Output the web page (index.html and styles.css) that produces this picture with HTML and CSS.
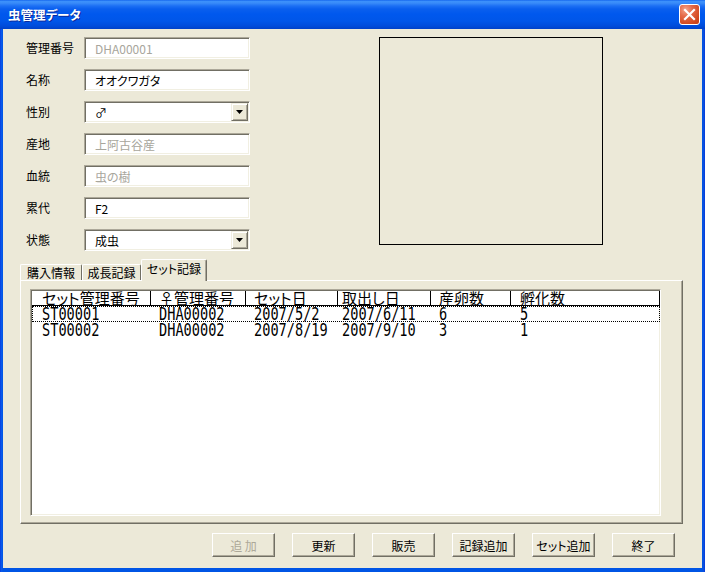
FILE: index.html
```html
<!DOCTYPE html>
<html lang="ja">
<head>
<meta charset="utf-8">
<title>虫管理データ</title>
<link rel="stylesheet" href="styles.css">
</head>
<body>
<div class="window">
  <div class="titlebar">
    <span class="title">虫管理データ</span>
    <button class="close" aria-label="閉じる">
      <svg width="19" height="19" viewBox="0 0 19 19"><path d="M5 5 L14 14 M14 5 L5 14" stroke="#fff" stroke-width="2.2" stroke-linecap="square" fill="none"/></svg>
    </button>
  </div>
  <div class="client">
    <div class="top">
      <div class="form">
        <span class="lbl">管理番号</span><div class="field disabled">DHA00001</div>
        <span class="lbl">名称</span><div class="field">オオクワガタ</div>
        <span class="lbl">性別</span><div class="field combo"><span>♂</span><span class="drop"><svg width="7" height="4" viewBox="0 0 7 4"><path d="M0 0 H7 L3.5 4 Z" fill="#000"/></svg></span></div>
        <span class="lbl">産地</span><div class="field disabled">上阿古谷産</div>
        <span class="lbl">血統</span><div class="field disabled">虫の樹</div>
        <span class="lbl">累代</span><div class="field">F2</div>
        <span class="lbl">状態</span><div class="field combo"><span>成虫</span><span class="drop"><svg width="7" height="4" viewBox="0 0 7 4"><path d="M0 0 H7 L3.5 4 Z" fill="#000"/></svg></span></div>
      </div>
      <div class="picture"></div>
    </div>

    <div class="tabs">
      <div class="tab t1">購入情報</div>
      <div class="tab t2">成長記録</div>
      <div class="tab active">セット記録</div>
    </div>
    <div class="panel">
      <div class="listview">
        <div class="lv-header">
          <div class="hc">セット管理番号</div>
          <div class="hc">♀管理番号</div>
          <div class="hc">セット日</div>
          <div class="hc">取出し日</div>
          <div class="hc">産卵数</div>
          <div class="hc">孵化数</div>
        </div>
        <div class="lv-row focus">
          <div class="c"><span class="num">ST00001</span></div>
          <div class="c"><span class="num">DHA00002</span></div>
          <div class="c"><span class="num">2007/5/2</span></div>
          <div class="c"><span class="num">2007/6/11</span></div>
          <div class="c"><span class="num">6</span></div>
          <div class="c"><span class="num">5</span></div>
        </div>
        <div class="lv-row">
          <div class="c"><span class="num">ST00002</span></div>
          <div class="c"><span class="num">DHA00002</span></div>
          <div class="c"><span class="num">2007/8/19</span></div>
          <div class="c"><span class="num">2007/9/10</span></div>
          <div class="c"><span class="num">3</span></div>
          <div class="c"><span class="num">1</span></div>
        </div>
      </div>
    </div>

    <div class="buttons">
      <button class="btn" disabled>追 加</button>
      <button class="btn">更新</button>
      <button class="btn">販売</button>
      <button class="btn">記録追加</button>
      <button class="btn">セット追加</button>
      <button class="btn">終了</button>
    </div>
  </div>
</div>
</body>
</html>
```

FILE: styles.css
```css
* { box-sizing: border-box; }
html, body { margin: 0; padding: 0; }
body {
  width: 705px;
  height: 572px;
  overflow: hidden;
  background: #ECE9D8;
  font-family: "Noto Sans CJK JP", "Noto Sans", sans-serif;
  font-size: 12px;
  color: #000;
}

.window {
  width: 705px;
  height: 572px;
  display: flex;
  flex-direction: column;
  background: linear-gradient(to right, #0831D9 0, #0A5AEC 1px, #0055E5 3px, #0055E5 702px, #0A4EDD 704px, #0831D9 705px);
}

.titlebar {
  height: 29px;
  flex: none;
  display: flex;
  align-items: center;
  justify-content: space-between;
  padding: 0 5px 0 8px;
  background: linear-gradient(to bottom, #0A5AE8 0, #3D91FC 1px, #3A8CF9 3px, #1C6FF4 6px, #0A5FEE 9px, #0058EE 14px, #0056E9 21px, #004CDB 26px, #0041C8 29px);
}
.title {
  color: #fff;
  font-weight: bold;
  font-size: 12.5px;
  text-shadow: 1px 1px 0 #0A2A9C;
  font-feature-settings: "palt";
}
.close {
  width: 21px;
  height: 21px;
  padding: 0;
  border: 1px solid #fff;
  border-radius: 3px;
  background: radial-gradient(circle at 30% 25%, #F3A48A 0%, #E56A49 35%, #D2491F 75%, #C33C16 100%);
  display: flex;
  align-items: center;
  justify-content: center;
}

.client {
  flex: 1;
  margin: 0 3px 4px 3px;
  background: #ECE9D8;
  display: flex;
  flex-direction: column;
  padding-top: 8px;
}

/* top form */
.top {
  display: flex;
  align-items: flex-start;
  padding-left: 23px;
}
.form {
  display: grid;
  grid-template-columns: 58px 166px;
  grid-auto-rows: 22px;
  row-gap: 10px;
  align-items: center;
}
.lbl {
  line-height: 22px;
  white-space: nowrap;
}
.field {
  height: 22px;
  background: #fff;
  border-style: solid;
  border-width: 1px;
  border-color: #ACA899 #FFFFFF #FFFFFF #ACA899;
  box-shadow: inset 1px 1px 0 #716F64, inset -1px -1px 0 #F1EFE2;
  padding-left: 10px;
  display: flex;
  align-items: center;
  white-space: nowrap;
  font-feature-settings: "palt";
}
.field.disabled { color: #A8A69C; }
.combo { justify-content: space-between; }
.drop {
  width: 17px;
  height: 18px;
  margin-right: 1px;
  background: #ECE9D8;
  border-style: solid;
  border-width: 1px;
  border-color: #F1EFE2 #716F64 #716F64 #F1EFE2;
  box-shadow: inset 1px 1px 0 #fff, inset -1px -1px 0 #ACA899;
  display: flex;
  align-items: center;
  justify-content: center;
}
.picture {
  margin-left: 129px;
  width: 224px;
  height: 208px;
  border: 1px solid #000;
}

/* tabs */
.tabs {
  display: flex;
  align-items: flex-end;
  margin: 8px 0 0 17px;
  height: 21px;
  position: relative;
  z-index: 1;
}
.tab {
  height: 16px;
  border-top: 1px solid #fff;
  border-left: 1px solid #fff;
  border-right: 1px solid #716F64;
  border-radius: 2px 2px 0 0;
  text-align: center;
  line-height: 15px;
  white-space: nowrap;
  font-feature-settings: "palt";
}
.t1 { width: 62px; }
.t2 { width: 59px; }
.tab.active {
  width: 66px;
  height: 22px;
  margin-bottom: -1px;
  background: #ECE9D8;
  line-height: 18px;
  box-shadow: inset -1px 0 0 #ACA899;
}

.panel {
  margin-left: 17px;
  width: 663px;
  height: 244px;
  border-style: solid;
  border-width: 1px;
  border-color: #fff #716F64 #716F64 #fff;
  box-shadow: inset -1px -1px 0 #ACA899;
  padding: 8px 0 0 9px;
}

.listview {
  width: 631px;
  height: 227px;
  background: #fff;
  border-style: solid;
  border-width: 1px;
  border-color: #ACA899 #fff #fff #ACA899;
  box-shadow: inset 1px 1px 0 #716F64, inset -1px -1px 0 #F1EFE2;
  padding: 1px;
}
.lv-header, .lv-row {
  display: grid;
  grid-template-columns: 119px 95px 92px 93px 80px 149px;
}
.lv-header {
  width: 628px;
  height: 15px;
  border-bottom: 1px solid #000;
}
.hc {
  border-right: 1px solid #000;
  font-size: 15px;
  line-height: 14px;
  white-space: nowrap;
  font-feature-settings: "palt";
  padding-left: 8px;
}
.lv-row {
  width: 628px;
  height: 16px;
}
.lv-row.focus {
  outline: 1px dotted #000;
  outline-offset: -1px;
}
.c {
  padding-left: 8px;
  height: 16px;
  white-space: nowrap;
}
.hc:nth-child(1), .c:nth-child(1) { padding-left: 10px; }
.hc:nth-child(4), .c:nth-child(4) { padding-left: 4px; }
.hc:nth-child(6), .c:nth-child(6) { padding-left: 9px; }
.num {
  display: inline-block;
  font-family: "DejaVu Sans Mono", "Liberation Mono", monospace;
  font-size: 17px;
  line-height: 16px;
  transform: scaleX(0.8);
  transform-origin: 0 50%;
}

/* buttons */
.buttons {
  display: flex;
  justify-content: flex-end;
  gap: 17px;
  margin-top: 9px;
  padding-right: 27px;
}
.btn {
  width: 63px;
  height: 24px;
  padding: 0;
  background: #ECE9D8;
  border-style: solid;
  border-width: 1px;
  border-color: #fff #716F64 #716F64 #fff;
  box-shadow: inset -1px -1px 0 #ACA899;
  font-family: "Noto Sans CJK JP", "Noto Sans", sans-serif;
  font-size: 12px;
  color: #000;
  font-feature-settings: "palt";
  white-space: nowrap;
}
.btn:disabled {
  color: #ACA899;
}
```
